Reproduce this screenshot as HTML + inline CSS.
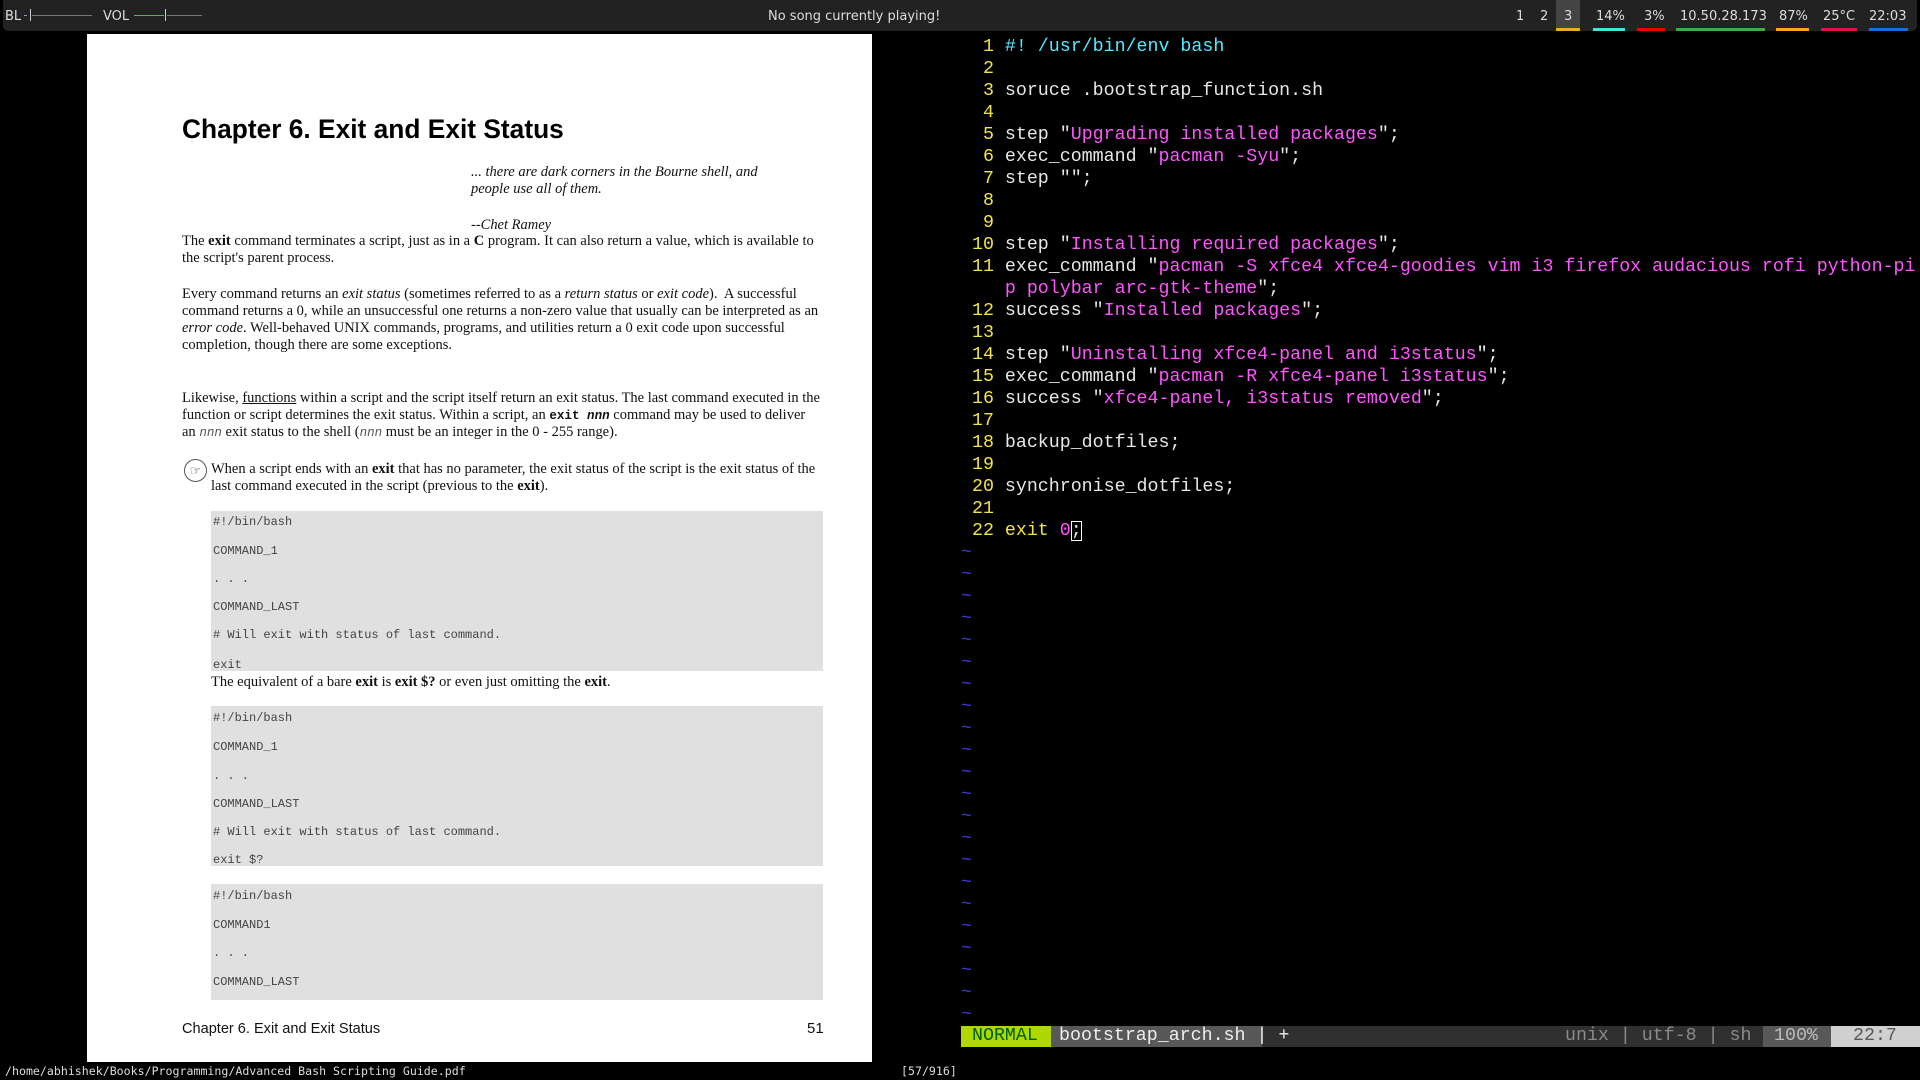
<!DOCTYPE html>
<html><head><meta charset="utf-8"><style>
*{margin:0;padding:0;box-sizing:border-box}
body{width:1920px;height:1080px;background:#000;position:relative;overflow:hidden;font-family:"Liberation Sans",sans-serif}
.abs{position:absolute;white-space:nowrap}
#bar{position:absolute;left:3px;top:0;width:1914px;height:31px;background:#222;border-radius:0 0 5px 5px;color:#ddd;font:13px "DejaVu Sans",sans-serif}
#bar .t{position:absolute;top:9px;white-space:nowrap}
.ul{position:absolute;top:28px;height:3px}
#page{position:absolute;left:87px;top:34px;width:785px;height:1028px;background:#fff}
.s{font-family:"Liberation Serif",serif;font-size:15px;color:#111;position:absolute;white-space:nowrap;line-height:17px;transform:scaleX(0.966);transform-origin:left}
.code{position:absolute;left:124px;width:612px;background:#e0e0e0}
.code div{position:absolute;left:2px;font:12px "Liberation Mono",monospace;color:#444;white-space:nowrap}
#vim{position:absolute;left:961px;top:36px;font:18.3px "Liberation Mono",monospace;line-height:22px;color:#e6e6e6}
#vim div{height:22px;white-space:pre}
.n{color:#f2e34a}.m{color:#ff55ff}.c{color:#55e8ff}.y{color:#f2e34a}.tl{color:#3a3ad0}
#st{position:absolute;left:961px;top:1026px;width:959px;height:21px;background:#303030;font:18.3px "Liberation Mono",monospace;line-height:21px}
#st span{position:absolute;top:0;height:21px;white-space:pre}
</style></head><body>
<div id="bar">
<span class="t" style="left:2px">BL</span>
<div style="position:absolute;left:21px;top:15px;width:3px;height:1px;background:#a88be0"></div>
<div style="position:absolute;left:27px;top:9px;width:1px;height:12px;background:#ccc"></div>
<div style="position:absolute;left:29px;top:15px;width:60px;height:1px;background:#777"></div>
<span class="t" style="left:100px">VOL</span>
<div style="position:absolute;left:131px;top:15px;width:30px;height:1px;background:#6a6"></div>
<div style="position:absolute;left:162px;top:9px;width:1px;height:12px;background:#ccc"></div>
<div style="position:absolute;left:164px;top:15px;width:35px;height:1px;background:#777"></div>
<span class="t" style="left:765px">No song currently playing!</span>
<span class="t" style="left:1513px">1</span>
<span class="t" style="left:1537px">2</span>
<div style="position:absolute;left:1553px;top:0;width:24px;height:28px;background:#444"></div>
<span class="t" style="left:1561px">3</span>
<div class="ul" style="left:1553px;width:24px;background:#f5a623"></div>
<span class="t" style="left:1593px">14%</span><div class="ul" style="left:1590px;width:32px;background:#3ee8d8"></div>
<span class="t" style="left:1641px">3%</span><div class="ul" style="left:1634px;width:28px;background:#e00"></div>
<span class="t" style="left:1677px">10.50.28.173</span><div class="ul" style="left:1673px;width:89px;background:#4a4"></div>
<span class="t" style="left:1776px">87%</span><div class="ul" style="left:1773px;width:33px;background:#f5a623"></div>
<span class="t" style="left:1820px">25°C</span><div class="ul" style="left:1818px;width:36px;background:#e0104a"></div>
<span class="t" style="left:1866px">22:03</span><div class="ul" style="left:1866px;width:39px;background:#1a6de0"></div>
</div>

<div id="page">
<div class="abs" style="left:95px;top:80px;font:bold 27px 'Liberation Sans',sans-serif;color:#000;transform:scaleX(0.975);transform-origin:left">Chapter 6. Exit and Exit Status</div>
<div class="s" style="left:384px;top:130px;font-style:italic">... there are dark corners in the Bourne shell, and</div>
<div class="s" style="left:384px;top:147px;font-style:italic">people use all of them.</div>
<div class="s" style="left:384px;top:183px;font-style:italic">--Chet Ramey</div>
<div class="s" style="left:95px;top:199px">The <b>exit</b> command terminates a script, just as in a <b>C</b> program. It can also return a value, which is available to</div>
<div class="s" style="left:95px;top:216px">the script's parent process.</div>
<div class="s" style="left:95px;top:252px">Every command returns an <i>exit status</i> (sometimes referred to as a <i>return status</i> or <i>exit code</i>).&nbsp; A successful</div>
<div class="s" style="left:95px;top:269px">command returns a 0, while an unsuccessful one returns a non-zero value that usually can be interpreted as an</div>
<div class="s" style="left:95px;top:286px"><i>error code</i>. Well-behaved UNIX commands, programs, and utilities return a 0 exit code upon successful</div>
<div class="s" style="left:95px;top:303px">completion, though there are some exceptions.</div>
<div class="s" style="left:95px;top:356px">Likewise, <u>functions</u> within a script and the script itself return an exit status. The last command executed in the</div>
<div class="s" style="left:95px;top:373px">function or script determines the exit status. Within a script, an <b style="font-family:'Liberation Mono',monospace;font-size:13px">exit <i>nnn</i></b> command may be used to deliver</div>
<div class="s" style="left:95px;top:390px">an <i style="font-family:'Liberation Mono',monospace;font-size:13px;color:#555">nnn</i> exit status to the shell (<i style="font-family:'Liberation Mono',monospace;font-size:13px;color:#555">nnn</i> must be an integer in the 0 - 255 range).</div>
<div style="position:absolute;left:97px;top:425px;width:23px;height:23px;border:1px solid #555;border-radius:50%;font-size:13px;text-align:center;line-height:21px;color:#333">☞</div>
<div class="s" style="left:124px;top:427px">When a script ends with an <b>exit</b> that has no parameter, the exit status of the script is the exit status of the</div>
<div class="s" style="left:124px;top:444px">last command executed in the script (previous to the <b>exit</b>).</div>

<div class="code" style="top:477px;height:160px">
<div style="top:4px">#!/bin/bash</div><div style="top:33px">COMMAND_1</div><div style="top:61px">. . .</div><div style="top:89px">COMMAND_LAST</div><div style="top:117px"># Will exit with status of last command.</div><div style="top:147px">exit</div></div>
<div class="s" style="left:124px;top:640px">The equivalent of a bare <b>exit</b> is <b>exit $?</b> or even just omitting the <b>exit</b>.</div>
<div class="code" style="top:672px;height:160px">
<div style="top:5px">#!/bin/bash</div><div style="top:34px">COMMAND_1</div><div style="top:63px">. . .</div><div style="top:91px">COMMAND_LAST</div><div style="top:119px"># Will exit with status of last command.</div><div style="top:147px">exit $?</div></div>
<div class="code" style="top:850px;height:116px">
<div style="top:5px">#!/bin/bash</div><div style="top:34px">COMMAND1</div><div style="top:62px">. . .</div><div style="top:91px">COMMAND_LAST</div></div>
<div class="abs" style="left:95px;top:986px;font-size:15px;color:#111;transform:scaleX(0.97);transform-origin:left">Chapter 6. Exit and Exit Status</div>
<div class="abs" style="left:720px;top:986px;font-size:15px;color:#111">51</div>
</div>

<div id="vim">
<div><span class="n">  1 </span><span class="c">#! /usr/bin/env bash</span></div>
<div><span class="n">  2 </span></div>
<div><span class="n">  3 </span>soruce .bootstrap_function.sh</div>
<div><span class="n">  4 </span></div>
<div><span class="n">  5 </span>step "<span class="m">Upgrading installed packages</span>";</div>
<div><span class="n">  6 </span>exec_command "<span class="m">pacman -Syu</span>";</div>
<div><span class="n">  7 </span>step "";</div>
<div><span class="n">  8 </span></div>
<div><span class="n">  9 </span></div>
<div><span class="n"> 10 </span>step "<span class="m">Installing required packages</span>";</div>
<div><span class="n"> 11 </span>exec_command "<span class="m">pacman -S xfce4 xfce4-goodies vim i3 firefox audacious rofi python-pi</span></div>
<div>    <span class="m">p polybar arc-gtk-theme</span>";</div>
<div><span class="n"> 12 </span>success "<span class="m">Installed packages</span>";</div>
<div><span class="n"> 13 </span></div>
<div><span class="n"> 14 </span>step "<span class="m">Uninstalling xfce4-panel and i3status</span>";</div>
<div><span class="n"> 15 </span>exec_command "<span class="m">pacman -R xfce4-panel i3status</span>";</div>
<div><span class="n"> 16 </span>success "<span class="m">xfce4-panel, i3status removed</span>";</div>
<div><span class="n"> 17 </span></div>
<div><span class="n"> 18 </span>backup_dotfiles;</div>
<div><span class="n"> 19 </span></div>
<div><span class="n"> 20 </span>synchronise_dotfiles;</div>
<div><span class="n"> 21 </span></div>
<div><span class="n"> 22 </span><span class="y">exit</span> <span class="m">0</span><span style="outline:1px solid #fff;outline-offset:-1px">;</span></div>
<div class="tl">~</div><div class="tl">~</div><div class="tl">~</div><div class="tl">~</div><div class="tl">~</div><div class="tl">~</div><div class="tl">~</div><div class="tl">~</div><div class="tl">~</div><div class="tl">~</div><div class="tl">~</div>
<div class="tl">~</div><div class="tl">~</div><div class="tl">~</div><div class="tl">~</div><div class="tl">~</div><div class="tl">~</div><div class="tl">~</div><div class="tl">~</div><div class="tl">~</div><div class="tl">~</div><div class="tl">~</div>
</div>

<div id="st">
<span style="left:0;width:90px;background:#afd700;color:#005f00;padding-left:11px">NORMAL</span>
<span style="left:90px;width:211px;background:#585858;color:#eee;padding-left:8px">bootstrap_arch.sh | +</span>
<span style="left:604px;color:#8a8a8a">unix | utf-8 | sh</span>
<span style="left:802px;width:68px;background:#585858;color:#bcbcbc;padding-left:11px">100%</span>
<span style="left:870px;width:89px;background:#d0d0d0;color:#585858;padding-left:22px">22:7</span>
</div>

<div class="abs" style="left:5px;top:1064px;font:11.6px 'DejaVu Sans Mono',monospace;color:#ddd">/home/abhishek/Books/Programming/Advanced Bash Scripting Guide.pdf</div>
<div class="abs" style="left:901px;top:1064px;font:11.6px 'DejaVu Sans Mono',monospace;color:#ddd">[57/916]</div>
</body></html>
